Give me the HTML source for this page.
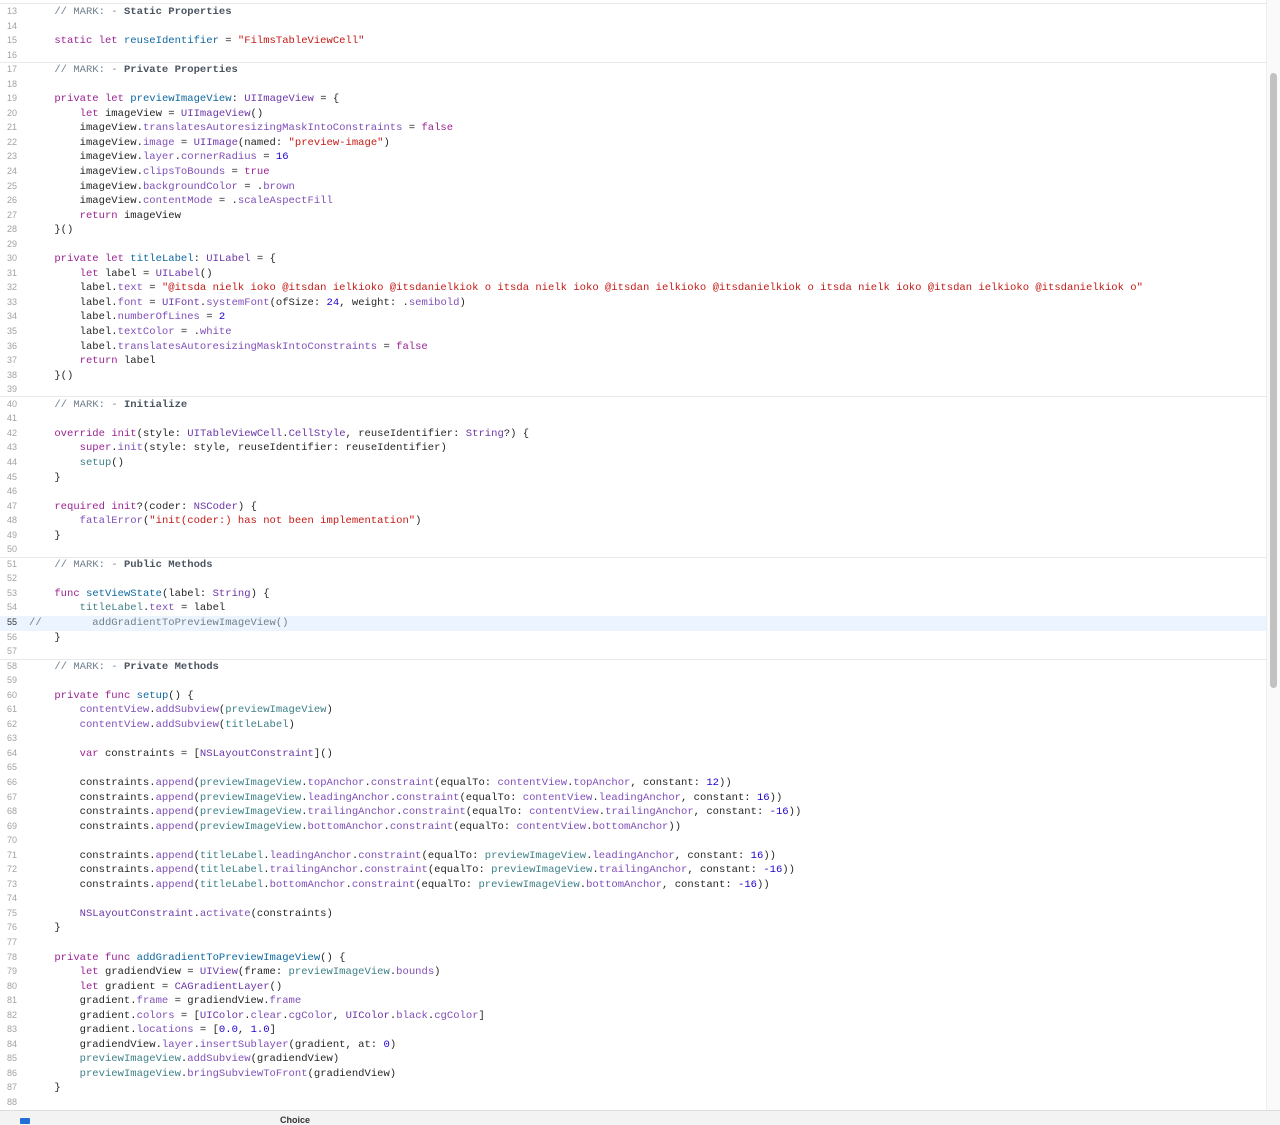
<!DOCTYPE html>
<html><head><meta charset="utf-8"><style>
body{margin:0;width:1280px;height:1124px;background:#fff;position:relative;overflow:hidden;font-family:"Liberation Mono",monospace;}
#code{position:absolute;left:0;top:5px;width:1266px;}
.l{height:14.55px;line-height:14.55px;font-size:10.55px;white-space:pre;position:relative;color:#262626;}
.l .g{position:absolute;left:0;top:-1px;width:17px;text-align:right;color:#a2a2a2;font-size:9px;font-family:"Liberation Sans",sans-serif;}
.l .c0{position:absolute;left:29px;}
.k{color:#9b2393}.t{color:#6c36a9}.s{color:#804fb8}.p{color:#3e8087}.d{color:#0f68a0}.r{color:#c41a16}.n{color:#1c00cf}.cm{color:#707f8c}.mk{color:#4a5560;font-weight:bold}
.sep{position:absolute;left:0;width:1266px;height:1px;background:#e9e9e9}
.hl{background:#ecf5ff}
</style></head><body>
<div class="sep" style="top:3px"></div>
<div class="sep" style="top:62px"></div>
<div class="sep" style="top:396px"></div>
<div class="sep" style="top:557px"></div>
<div class="sep" style="top:659px"></div>
<div style="position:absolute;left:1266px;top:0;width:14px;height:1110px;background:#fafafa;border-left:1px solid #eee"></div>
<div style="position:absolute;left:1270px;top:73px;width:7px;height:615px;background:#c2c2c2;border-radius:4px"></div>
<div id="code">
<div class="l"><span class="g">13</span><span class="c0">    <span class="cm">// MARK: - </span><span class="mk">Static Properties</span></span></div>
<div class="l"><span class="g">14</span></div>
<div class="l"><span class="g">15</span><span class="c0">    <span class="k">static let</span> <span class="d">reuseIdentifier</span> = <span class="r">"FilmsTableViewCell"</span></span></div>
<div class="l"><span class="g">16</span></div>
<div class="l"><span class="g">17</span><span class="c0">    <span class="cm">// MARK: - </span><span class="mk">Private Properties</span></span></div>
<div class="l"><span class="g">18</span></div>
<div class="l"><span class="g">19</span><span class="c0">    <span class="k">private let</span> <span class="d">previewImageView</span>: <span class="t">UIImageView</span> = {</span></div>
<div class="l"><span class="g">20</span><span class="c0">        <span class="k">let</span> imageView = <span class="t">UIImageView</span>()</span></div>
<div class="l"><span class="g">21</span><span class="c0">        imageView.<span class="s">translatesAutoresizingMaskIntoConstraints</span> = <span class="k">false</span></span></div>
<div class="l"><span class="g">22</span><span class="c0">        imageView.<span class="s">image</span> = <span class="t">UIImage</span>(named: <span class="r">"preview-image"</span>)</span></div>
<div class="l"><span class="g">23</span><span class="c0">        imageView.<span class="s">layer</span>.<span class="s">cornerRadius</span> = <span class="n">16</span></span></div>
<div class="l"><span class="g">24</span><span class="c0">        imageView.<span class="s">clipsToBounds</span> = <span class="k">true</span></span></div>
<div class="l"><span class="g">25</span><span class="c0">        imageView.<span class="s">backgroundColor</span> = .<span class="s">brown</span></span></div>
<div class="l"><span class="g">26</span><span class="c0">        imageView.<span class="s">contentMode</span> = .<span class="s">scaleAspectFill</span></span></div>
<div class="l"><span class="g">27</span><span class="c0">        <span class="k">return</span> imageView</span></div>
<div class="l"><span class="g">28</span><span class="c0">    }()</span></div>
<div class="l"><span class="g">29</span></div>
<div class="l"><span class="g">30</span><span class="c0">    <span class="k">private let</span> <span class="d">titleLabel</span>: <span class="t">UILabel</span> = {</span></div>
<div class="l"><span class="g">31</span><span class="c0">        <span class="k">let</span> label = <span class="t">UILabel</span>()</span></div>
<div class="l"><span class="g">32</span><span class="c0">        label.<span class="s">text</span> = <span class="r">"@itsda nielk ioko @itsdan ielkioko @itsdanielkiok o itsda nielk ioko @itsdan ielkioko @itsdanielkiok o itsda nielk ioko @itsdan ielkioko @itsdanielkiok o"</span></span></div>
<div class="l"><span class="g">33</span><span class="c0">        label.<span class="s">font</span> = <span class="t">UIFont</span>.<span class="s">systemFont</span>(ofSize: <span class="n">24</span>, weight: .<span class="s">semibold</span>)</span></div>
<div class="l"><span class="g">34</span><span class="c0">        label.<span class="s">numberOfLines</span> = <span class="n">2</span></span></div>
<div class="l"><span class="g">35</span><span class="c0">        label.<span class="s">textColor</span> = .<span class="s">white</span></span></div>
<div class="l"><span class="g">36</span><span class="c0">        label.<span class="s">translatesAutoresizingMaskIntoConstraints</span> = <span class="k">false</span></span></div>
<div class="l"><span class="g">37</span><span class="c0">        <span class="k">return</span> label</span></div>
<div class="l"><span class="g">38</span><span class="c0">    }()</span></div>
<div class="l"><span class="g">39</span></div>
<div class="l"><span class="g">40</span><span class="c0">    <span class="cm">// MARK: - </span><span class="mk">Initialize</span></span></div>
<div class="l"><span class="g">41</span></div>
<div class="l"><span class="g">42</span><span class="c0">    <span class="k">override</span> <span class="k">init</span>(style: <span class="t">UITableViewCell</span>.<span class="t">CellStyle</span>, reuseIdentifier: <span class="t">String</span>?) {</span></div>
<div class="l"><span class="g">43</span><span class="c0">        <span class="k">super</span>.<span class="s">init</span>(style: style, reuseIdentifier: reuseIdentifier)</span></div>
<div class="l"><span class="g">44</span><span class="c0">        <span class="p">setup</span>()</span></div>
<div class="l"><span class="g">45</span><span class="c0">    }</span></div>
<div class="l"><span class="g">46</span></div>
<div class="l"><span class="g">47</span><span class="c0">    <span class="k">required</span> <span class="k">init</span>?(coder: <span class="t">NSCoder</span>) {</span></div>
<div class="l"><span class="g">48</span><span class="c0">        <span class="s">fatalError</span>(<span class="r">"init(coder:) has not been implementation"</span>)</span></div>
<div class="l"><span class="g">49</span><span class="c0">    }</span></div>
<div class="l"><span class="g">50</span></div>
<div class="l"><span class="g">51</span><span class="c0">    <span class="cm">// MARK: - </span><span class="mk">Public Methods</span></span></div>
<div class="l"><span class="g">52</span></div>
<div class="l"><span class="g">53</span><span class="c0">    <span class="k">func</span> <span class="d">setViewState</span>(label: <span class="t">String</span>) {</span></div>
<div class="l"><span class="g">54</span><span class="c0">        <span class="p">titleLabel</span>.<span class="s">text</span> = label</span></div>
<div class="l hl"><span class="g" style="color:#333">55</span><span class="c0"><span class="cm">//        addGradientToPreviewImageView()</span></span></div>
<div class="l"><span class="g">56</span><span class="c0">    }</span></div>
<div class="l"><span class="g">57</span></div>
<div class="l"><span class="g">58</span><span class="c0">    <span class="cm">// MARK: - </span><span class="mk">Private Methods</span></span></div>
<div class="l"><span class="g">59</span></div>
<div class="l"><span class="g">60</span><span class="c0">    <span class="k">private func</span> <span class="d">setup</span>() {</span></div>
<div class="l"><span class="g">61</span><span class="c0">        <span class="s">contentView</span>.<span class="s">addSubview</span>(<span class="p">previewImageView</span>)</span></div>
<div class="l"><span class="g">62</span><span class="c0">        <span class="s">contentView</span>.<span class="s">addSubview</span>(<span class="p">titleLabel</span>)</span></div>
<div class="l"><span class="g">63</span></div>
<div class="l"><span class="g">64</span><span class="c0">        <span class="k">var</span> constraints = [<span class="t">NSLayoutConstraint</span>]()</span></div>
<div class="l"><span class="g">65</span></div>
<div class="l"><span class="g">66</span><span class="c0">        constraints.<span class="s">append</span>(<span class="p">previewImageView</span>.<span class="s">topAnchor</span>.<span class="s">constraint</span>(equalTo: <span class="s">contentView</span>.<span class="s">topAnchor</span>, constant: <span class="n">12</span>))</span></div>
<div class="l"><span class="g">67</span><span class="c0">        constraints.<span class="s">append</span>(<span class="p">previewImageView</span>.<span class="s">leadingAnchor</span>.<span class="s">constraint</span>(equalTo: <span class="s">contentView</span>.<span class="s">leadingAnchor</span>, constant: <span class="n">16</span>))</span></div>
<div class="l"><span class="g">68</span><span class="c0">        constraints.<span class="s">append</span>(<span class="p">previewImageView</span>.<span class="s">trailingAnchor</span>.<span class="s">constraint</span>(equalTo: <span class="s">contentView</span>.<span class="s">trailingAnchor</span>, constant: <span class="n">-16</span>))</span></div>
<div class="l"><span class="g">69</span><span class="c0">        constraints.<span class="s">append</span>(<span class="p">previewImageView</span>.<span class="s">bottomAnchor</span>.<span class="s">constraint</span>(equalTo: <span class="s">contentView</span>.<span class="s">bottomAnchor</span>))</span></div>
<div class="l"><span class="g">70</span></div>
<div class="l"><span class="g">71</span><span class="c0">        constraints.<span class="s">append</span>(<span class="p">titleLabel</span>.<span class="s">leadingAnchor</span>.<span class="s">constraint</span>(equalTo: <span class="p">previewImageView</span>.<span class="s">leadingAnchor</span>, constant: <span class="n">16</span>))</span></div>
<div class="l"><span class="g">72</span><span class="c0">        constraints.<span class="s">append</span>(<span class="p">titleLabel</span>.<span class="s">trailingAnchor</span>.<span class="s">constraint</span>(equalTo: <span class="p">previewImageView</span>.<span class="s">trailingAnchor</span>, constant: <span class="n">-16</span>))</span></div>
<div class="l"><span class="g">73</span><span class="c0">        constraints.<span class="s">append</span>(<span class="p">titleLabel</span>.<span class="s">bottomAnchor</span>.<span class="s">constraint</span>(equalTo: <span class="p">previewImageView</span>.<span class="s">bottomAnchor</span>, constant: <span class="n">-16</span>))</span></div>
<div class="l"><span class="g">74</span></div>
<div class="l"><span class="g">75</span><span class="c0">        <span class="t">NSLayoutConstraint</span>.<span class="s">activate</span>(constraints)</span></div>
<div class="l"><span class="g">76</span><span class="c0">    }</span></div>
<div class="l"><span class="g">77</span></div>
<div class="l"><span class="g">78</span><span class="c0">    <span class="k">private func</span> <span class="d">addGradientToPreviewImageView</span>() {</span></div>
<div class="l"><span class="g">79</span><span class="c0">        <span class="k">let</span> gradiendView = <span class="t">UIView</span>(frame: <span class="p">previewImageView</span>.<span class="s">bounds</span>)</span></div>
<div class="l"><span class="g">80</span><span class="c0">        <span class="k">let</span> gradient = <span class="t">CAGradientLayer</span>()</span></div>
<div class="l"><span class="g">81</span><span class="c0">        gradient.<span class="s">frame</span> = gradiendView.<span class="s">frame</span></span></div>
<div class="l"><span class="g">82</span><span class="c0">        gradient.<span class="s">colors</span> = [<span class="t">UIColor</span>.<span class="s">clear</span>.<span class="s">cgColor</span>, <span class="t">UIColor</span>.<span class="s">black</span>.<span class="s">cgColor</span>]</span></div>
<div class="l"><span class="g">83</span><span class="c0">        gradient.<span class="s">locations</span> = [<span class="n">0.0</span>, <span class="n">1.0</span>]</span></div>
<div class="l"><span class="g">84</span><span class="c0">        gradiendView.<span class="s">layer</span>.<span class="s">insertSublayer</span>(gradient, at: <span class="n">0</span>)</span></div>
<div class="l"><span class="g">85</span><span class="c0">        <span class="p">previewImageView</span>.<span class="s">addSubview</span>(gradiendView)</span></div>
<div class="l"><span class="g">86</span><span class="c0">        <span class="p">previewImageView</span>.<span class="s">bringSubviewToFront</span>(gradiendView)</span></div>
<div class="l"><span class="g">87</span><span class="c0">    }</span></div>
<div class="l"><span class="g">88</span></div>
</div>
<div style="position:absolute;left:0;top:1110px;width:1280px;height:14px;background:#f3f3f3;border-top:1px solid #ddd"></div>
<div style="position:absolute;left:20px;top:1118px;width:10px;height:6px;background:#1f6fd6;border-radius:1px"></div>
<div style="position:absolute;left:280px;top:1115px;font:bold 9px 'Liberation Sans',sans-serif;color:#333">Choice</div>
</body></html>
